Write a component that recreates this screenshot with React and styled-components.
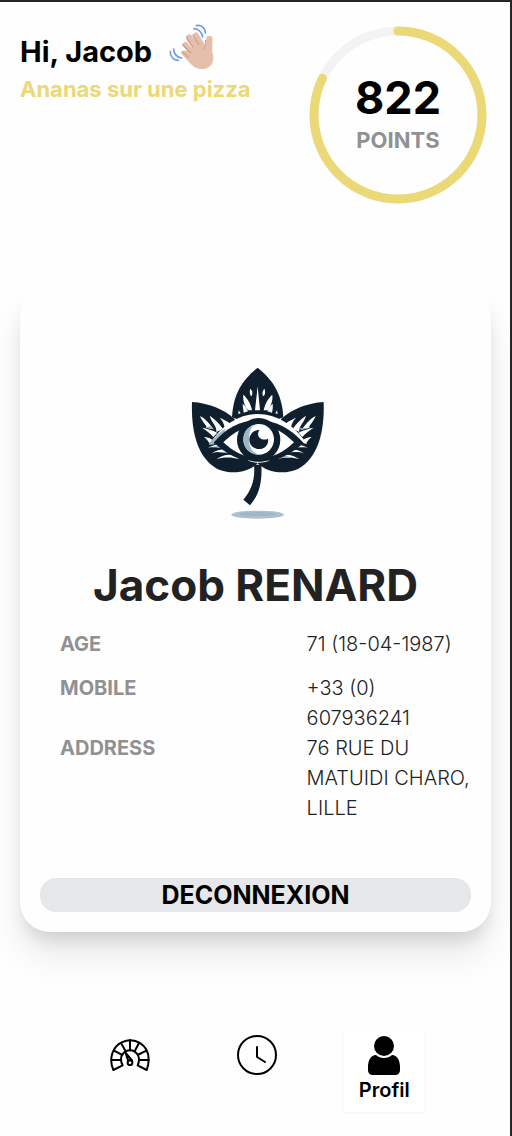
import React from "react";
import styled, { createGlobalStyle } from "styled-components";

const GlobalStyle = createGlobalStyle`
  *, *::before, *::after { box-sizing: border-box; }
  body {
    margin: 0;
    background: #fefefe;
    font-family: Inter, "Liberation Sans", sans-serif;
    color: #000;
  }
`;

const Page = styled.div`
  display: flex;
  flex-direction: column;
  min-height: 100vh;
  border-top: 2px solid #272525;
  border-right: 2px solid #272525;
`;

const Header = styled.header`
  display: flex;
  justify-content: space-between;
  align-items: flex-start;
  padding: 22px 23px 0 20px;
`;

const GreetingRow = styled.div`
  display: flex;
  align-items: flex-end;
  gap: 17px;
`;

const Greeting = styled.h1`
  margin: 0;
  font-size: 29px;
  line-height: 36px;
  font-weight: 700;
`;

const Tagline = styled.p`
  margin: 4px 0 0;
  font-size: 22px;
  line-height: 30px;
  font-weight: 700;
  color: #ebd876;
`;

const Score = styled.div`
  display: grid;
  place-items: center;
  > * { grid-area: 1 / 1; }
`;

const ScoreText = styled.div`
  text-align: center;
`;

const ScoreValue = styled.div`
  font-size: 45px;
  line-height: 54px;
  font-weight: 700;
`;

const ScoreUnit = styled.div`
  font-size: 22px;
  line-height: 30px;
  font-weight: 700;
  color: #919191;
`;

const Card = styled.main`
  display: flex;
  flex-direction: column;
  margin: 84px 19px 0 20px;
  padding: 74px 20px 20px;
  border-radius: 30px;
  background: #fefefe;
  box-shadow: 0 25px 34px rgba(0, 0, 0, 0.08), 0 12px 18px -6px rgba(0, 0, 0, 0.14);
`;

const Logo = styled.svg`
  align-self: center;
  flex: none;
`;

const Name = styled.h2`
  margin: 30px 0 14px;
  text-align: center;
  font-size: 44px;
  line-height: 60px;
  font-weight: 700;
  color: #222;
`;

const Details = styled.dl`
  display: grid;
  grid-template-columns: minmax(0, 3fr) minmax(0, 2fr);
  grid-auto-rows: minmax(44px, auto);
  margin: 0 0 55px;
  padding-left: 20px;
  font-size: 20px;
  line-height: 30px;
`;

const Term = styled.dt`
  font-weight: 700;
  color: #919191;
`;

const Value = styled.dd`
  margin: 0;
  font-weight: 300;
  color: #222;
`;

const LogoutButton = styled.button`
  height: 34px;
  padding: 0;
  border: 0;
  border-radius: 16px;
  background: #e5e7eb;
  color: #000;
  font: 700 25px/34px Inter, "Liberation Sans", sans-serif;
`;

const Nav = styled.nav`
  display: grid;
  grid-template-columns: repeat(3, 1fr);
  justify-items: center;
  margin-top: 98px;
  padding: 0 62px 24px 66px;
`;

const NavLink = styled.a`
  display: flex;
  flex-direction: column;
  align-items: center;
  width: 80px;
  height: 82px;
  padding-top: 5px;
  border-radius: 2px;
  color: #000;
  text-decoration: none;
  font-size: 20px;
  line-height: 30px;
  font-weight: 600;
  background: ${(p) => (p.$active ? "#fff" : "none")};
  box-shadow: ${(p) => (p.$active ? "0 1px 3px rgba(0, 0, 0, 0.06)" : "none")};
`;

function WavingHand() {
  return (
    <svg width="46" height="46" viewBox="27 27 138 138" fill="none" strokeLinecap="round" aria-hidden="true">
      <g stroke="#e6bfab">
        <path d="M108 60L134 104" strokeWidth="16" />
        <path d="M88 67L122 112" strokeWidth="17" />
        <path d="M76 89L108 124" strokeWidth="16" />
        <path d="M72 114L106 142" strokeWidth="15" />
        <path d="M148 72L147 116" strokeWidth="19" />
      </g>
      <path d="M86 96L130 92L140 98C149 98 160 108 160 128C160 149 146 162 126 162C112 162 101 156 92 147L70 122Z" fill="#e6bfab" />
      <g stroke="#c9a08c" strokeWidth="4">
        <path d="M80 66C83 80 92 87 98 95" />
        <path d="M99 60C103 72 110 80 117 88" />
        <path d="M69 88C72 96 82 103 92 113" />
        <path d="M66 111C73 116 79 121 85 127" />
        <path d="M137 76C138 87 136 96 130 103" strokeWidth="3" />
      </g>
      <g stroke="#6f99f2" strokeWidth="5">
        <path d="M109 32C124 28 137 40 136 54" />
        <path d="M102 41C116 41 126 53 128 66" />
        <path d="M31 110C30 125 42 137 55 136" />
        <path d="M41 102C41 116 51 128 65 129" />
      </g>
    </svg>
  );
}

function ScoreRing({ percent }) {
  return (
    <svg width="178" height="178" viewBox="0 -2 178 178" fill="none" strokeWidth="9" aria-hidden="true" overflow="visible">
      <circle cx="89" cy="89" r="84" stroke="#f3f3f3" />
      <circle
        cx="89"
        cy="89"
        r="84"
        stroke="#ebd876"
        strokeLinecap="round"
        pathLength="100"
        strokeDasharray={`${percent} 100`}
        transform="rotate(-90 89 89)"
      />
    </svg>
  );
}

function LeafVeins() {
  return (
    <g fill="#fff">
      <path d="M60 168C74 174 88 190 101 208L78 203C84 199 68 189 60 168Z" />
      <path d="M89 167C104 177 119 192 129 207L109 216C111 198 96 190 89 167Z" />
      <path d="M119 173C130 178 142 184 151 191L134 202C132 190 127 182 119 173Z" />
      <path d="M66 203C82 205 96 211 112 218L100 231C91 219 80 213 66 203Z" />
      <path d="M72 231C81 231 88 234 97 239L88 250C84 242 80 237 72 231Z" />
      <path d="M84 263C98 257 108 252 119 251L134 265C118 262 100 260 84 263Z" />
      <path d="M94 281C110 270 126 266 140 270L152 280C132 276 111 274 94 281Z" />
      <path d="M109 298C124 286 145 281 160 286L178 297C154 291 130 290 109 298Z" />
    </g>
  );
}

function LeafEyeLogo() {
  return (
    <Logo width="155" height="165" viewBox="-6 0 465 495" role="img" aria-label="Leaf eye logo">
      <g fill="#101f2e">
        <path d="M233 23C190 58 160 98 156 172L233 200L310 172C306 98 276 58 233 23Z" />
        <path d="M36 126C85 129 130 147 163 176L233 310C206 337 156 346 112 327C52 294 33 215 36 126Z" />
        <path d="M431 126C382 129 337 147 304 176L233 310C260 337 310 346 354 327C414 294 434 215 431 126Z" />
        <path d="M222 314H244C247 365 238 404 210 436L190 419C215 391 226 358 222 314Z" />
      </g>
      <LeafVeins />
      <g transform="matrix(-1 0 0 1 467 0)">
        <LeafVeins />
      </g>
      <g fill="#9bb5c5">
        <path d="M78 203L101 208L91 198ZM96 260L134 265L119 257ZM111 278L152 280L140 275ZM356 205L389 203L365 210ZM328 265L365 261L346 257ZM302 294L338 294L315 287Z" />
      </g>
      <g fill="#fff">
        <path d="M233 79L240 151H225Z" />
        <path d="M190 104C199 112 211 126 216 151L205 151C194 139 188 122 190 104Z" />
        <path d="M277 104C268 112 256 126 251 151L262 151C273 139 279 122 277 104Z" />
        <path d="M211 86C219 93 218 104 214 109C209 104 208 94 211 86Z" />
        <path d="M253 86C246 93 246 104 250 109C256 104 257 94 253 86Z" />
        <path d="M188 131C196 138 202 146 204 154L191 158C190 148 188 140 188 131Z" />
        <path d="M278 131C270 138 264 146 262 154L276 158C278 148 279 140 278 131Z" />
        <path d="M176 151L182 160L175 162ZM291 151L286 160L293 162Z" />
      </g>
      <path d="M88 252C127 195 177 162 233 162C291 162 343 195 381 252L365 248C329 207 286 183 235 183C184 183 138 207 101 253Z" fill="#fff" />
      <path d="M86 255C100 234 118 216 137 206L134 216C119 226 110 239 101 253Z" fill="#9bb5c5" />
      <path d="M101 248C139 203 184 181 234 181C286 181 330 204 371 249C329 285 291 306 238 306C184 306 144 285 101 248Z" fill="#101f2e" />
      <path d="M130 247C164 213 198 197 238 197C278 197 307 213 342 247C312 276 279 294 238 294C197 294 162 277 130 247Z" fill="#fff" />
      <circle cx="236" cy="239" r="65" fill="#101f2e" />
      <circle cx="236" cy="238" r="46" fill="#fff" />
      <path d="M222 194C202 201 190 218 190 238C190 266 211 285 237 284C216 277 207 260 207 239C207 219 211 205 222 194Z" fill="#9bb5c5" />
      <path d="M239 210C223 209 208 222 208 239C208 255 221 267 237 267C255 267 267 253 264 236C257 240 246 240 240 234C232 227 233 216 239 210Z" fill="#101f2e" />
      <path d="M202 300C221 307 250 307 270 300C256 311 217 311 202 300Z" fill="#fff" />
      <ellipse cx="233" cy="464" rx="79" ry="12" fill="#adc1cd" />
      <ellipse cx="233" cy="462" rx="56" ry="6" fill="#9fb6c4" />
    </Logo>
  );
}

function GaugeIcon() {
  return (
    <svg width="40" height="40" viewBox="0 0 120 120" fill="none" stroke="#000" strokeWidth="6" strokeLinejoin="round" strokeLinecap="round" aria-hidden="true">
      <path d="M10 105C-6 68 11 33 35 22C75 3 116 30 116 73C116 86 114 96 110 105L83 91C91 73 86 57 74 50C56 40 34 51 33 72C33 80 34 86 38 91Z" />
      <path d="M5 75H33M12 47L37 60M33 24L47 49M60 15V46M87 24L74 49M109 47L83 60M116 75H87" />
      <circle cx="60" cy="83" r="7" />
      <path d="M47 54L54 76L66 76Z" />
    </svg>
  );
}

function ClockIcon() {
  return (
    <svg width="40" height="40" viewBox="0 0 40 40" fill="none" stroke="#000" strokeWidth="2" strokeLinecap="round" strokeLinejoin="round" aria-hidden="true">
      <circle cx="20" cy="20" r="19" />
      <path d="M20 12V22L28 27" />
    </svg>
  );
}

function PersonIcon() {
  return (
    <svg width="40" height="40" viewBox="0 0 40 40" fill="#000" aria-hidden="true">
      <circle cx="20" cy="11" r="10" />
      <path d="M12 20C16 24 24 24 28 20C33 20 36 25 36 32V35C36 38 34 40 31 40H9C6 40 4 38 4 35V32C4 25 7 20 12 20Z" />
    </svg>
  );
}

const details = [
  ["AGE", "71 (18-04-1987)"],
  ["MOBILE", "+33 (0) 607936241"],
  ["ADDRESS", "76 RUE DU MATUIDI CHARO, LILLE"],
];

export default function App() {
  return (
    <>
      <GlobalStyle />
      <Page>
        <Header>
          <div>
            <GreetingRow>
              <Greeting>Hi, Jacob</Greeting>
              <WavingHand />
            </GreetingRow>
            <Tagline>Ananas sur une pizza</Tagline>
          </div>
          <Score>
            <ScoreRing percent={82.2} />
            <ScoreText>
              <ScoreValue>822</ScoreValue>
              <ScoreUnit>POINTS</ScoreUnit>
            </ScoreText>
          </Score>
        </Header>
        <Card>
          <LeafEyeLogo />
          <Name>Jacob RENARD</Name>
          <Details>
            {details.map(([term, value]) => (
              <React.Fragment key={term}>
                <Term>{term}</Term>
                <Value>{value}</Value>
              </React.Fragment>
            ))}
          </Details>
          <LogoutButton type="button">DECONNEXION</LogoutButton>
        </Card>
        <Nav>
          <NavLink href="#dashboard" aria-label="Dashboard">
            <GaugeIcon />
          </NavLink>
          <NavLink href="#history" aria-label="History">
            <ClockIcon />
          </NavLink>
          <NavLink href="#profil" $active aria-current="page">
            <PersonIcon />
            Profil
          </NavLink>
        </Nav>
      </Page>
    </>
  );
}
